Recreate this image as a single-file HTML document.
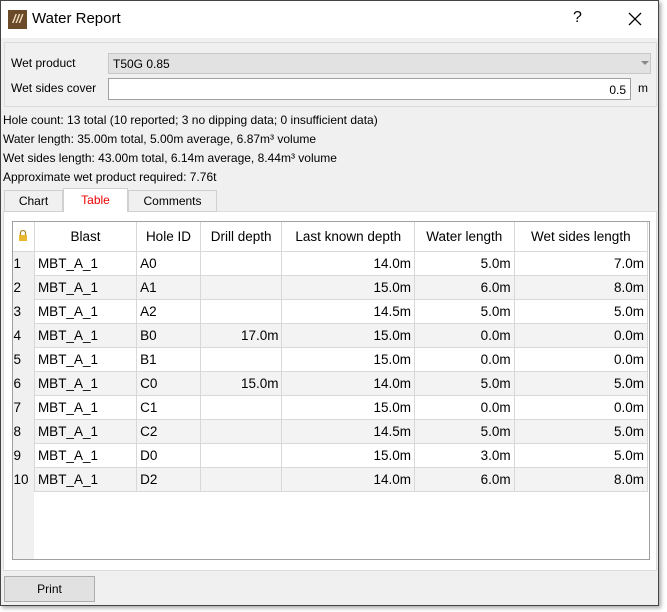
<!DOCTYPE html>
<html><head><style>
*{box-sizing:border-box;margin:0;padding:0}
body{width:667px;height:612px;background:#fff;font-family:"Liberation Sans",sans-serif;position:relative;overflow:hidden;color:#000}
.win{position:absolute;left:0;top:0;width:659px;height:606px;background:#f0f0f0;border:1px solid #444;box-shadow:2px 2px 4px rgba(0,0,0,.35)}
.title{position:absolute;left:0;top:0;width:657px;height:37px;background:#fff}
.abs{position:absolute;white-space:nowrap}
.info{font-size:12px;left:2px}
table{border-collapse:collapse;font-size:13.5px}
td,th{border:1px solid #d8d8d8;height:24px;padding:0 3px;font-weight:normal}
th{height:30px;background:#fff}
td.n{background:#f0f0f0;border:none;padding-left:1px}
td.r{text-align:right}
tr.alt td{background:#f3f3f3}
tr.alt td.n{background:#f0f0f0}
</style></head><body>
<div class="win">
<div class="title">
 <div class="abs" style="left:7px;top:9px;width:19px;height:19px;background:#6b4a2a;color:#f0e0c0;font-size:12px;font-weight:bold;font-style:italic;text-align:center;line-height:19px">///</div>
 <div class="abs" style="left:31px;top:9px;font-size:15px">Water Report</div>
 <div class="abs" style="left:572px;top:8px;font-size:16px">?</div>
 <svg class="abs" style="left:627px;top:11px" width="14" height="14"><path d="M1 1L13 13M13 1L1 13" stroke="#000" stroke-width="1.3"/></svg>
</div>
<div class="abs" style="left:3px;top:41px;width:653px;height:65px;border:1px solid #dcdcdc"></div>
<div class="abs" style="left:10px;top:55px;font-size:12px">Wet product</div>
<div class="abs" style="left:107px;top:52px;width:543px;height:21px;background:#e2e2e2;border:1px solid #c8c8c8;font-size:12px;padding:3px 4px">T50G 0.85</div>
<div class="abs" style="left:640px;top:60px;width:0;height:0;border-left:4px solid transparent;border-right:4px solid transparent;border-top:4px solid #888"></div>
<div class="abs" style="left:10px;top:80px;font-size:12px">Wet sides cover</div>
<div class="abs" style="left:107px;top:77px;width:523px;height:22px;background:#fff;border:1px solid #a0a0a0;font-size:12px;padding:4px 4px;text-align:right">0.5</div>
<div class="abs" style="left:637px;top:80px;font-size:12px">m</div>
<div class="abs info" style="top:112px">Hole count: 13 total (10 reported; 3 no dipping data; 0 insufficient data)</div>
<div class="abs info" style="top:131px">Water length: 35.00m total, 5.00m average, 6.87m³ volume</div>
<div class="abs info" style="top:150px">Wet sides length: 43.00m total, 6.14m average, 8.44m³ volume</div>
<div class="abs info" style="top:169px">Approximate wet product required: 7.76t</div>
<div class="abs" style="left:2px;top:210px;width:654px;height:360px;background:#fff;border:1px solid #dcdcdc"></div>
<div class="abs" style="left:3px;top:189px;width:59px;height:22px;border:1px solid #d0d0d0;background:#f0f0f0;font-size:12px;text-align:center;line-height:20px">Chart</div>
<div class="abs" style="left:62px;top:187px;width:65px;height:24px;border:1px solid #d0d0d0;border-bottom:none;background:#fff;font-size:12px;text-align:center;line-height:22px;color:#e00">Table</div>
<div class="abs" style="left:127px;top:189px;width:89px;height:22px;border:1px solid #d0d0d0;background:#f0f0f0;font-size:12px;text-align:center;line-height:20px">Comments</div>
<div class="abs" style="left:11px;top:220px;width:638px;height:339px;border:1px solid #a0a0a0;background:#fff;overflow:hidden">
<div class="abs" style="left:0;top:30px;width:21px;height:310px;background:#f0f0f0"></div>
<table class="abs" style="left:-1px;top:-1px">
<tr><th style="width:22px;border-right:1px solid #d8d8d8"><svg width="10" height="13"><path d="M2.5 6V4a2.5 2.5 0 0 1 5 0v2" fill="none" stroke="#b08a2a" stroke-width="1.3"/><rect x="1" y="6" width="8" height="6" fill="#e8b830"/></svg></th><th style="width:103px">Blast</th><th style="width:64px">Hole ID</th><th style="width:82px">Drill depth</th><th style="width:133px">Last known depth</th><th style="width:100px">Water length</th><th style="width:134px">Wet sides length</th></tr>
<tr><td class="n">1</td><td>MBT_A_1</td><td>A0</td><td></td><td class="r">14.0m</td><td class="r">5.0m</td><td class="r">7.0m</td></tr>
<tr class="alt"><td class="n">2</td><td>MBT_A_1</td><td>A1</td><td></td><td class="r">15.0m</td><td class="r">6.0m</td><td class="r">8.0m</td></tr>
<tr><td class="n">3</td><td>MBT_A_1</td><td>A2</td><td></td><td class="r">14.5m</td><td class="r">5.0m</td><td class="r">5.0m</td></tr>
<tr class="alt"><td class="n">4</td><td>MBT_A_1</td><td>B0</td><td class="r">17.0m</td><td class="r">15.0m</td><td class="r">0.0m</td><td class="r">0.0m</td></tr>
<tr><td class="n">5</td><td>MBT_A_1</td><td>B1</td><td></td><td class="r">15.0m</td><td class="r">0.0m</td><td class="r">0.0m</td></tr>
<tr class="alt"><td class="n">6</td><td>MBT_A_1</td><td>C0</td><td class="r">15.0m</td><td class="r">14.0m</td><td class="r">5.0m</td><td class="r">5.0m</td></tr>
<tr><td class="n">7</td><td>MBT_A_1</td><td>C1</td><td></td><td class="r">15.0m</td><td class="r">0.0m</td><td class="r">0.0m</td></tr>
<tr class="alt"><td class="n">8</td><td>MBT_A_1</td><td>C2</td><td></td><td class="r">14.5m</td><td class="r">5.0m</td><td class="r">5.0m</td></tr>
<tr><td class="n">9</td><td>MBT_A_1</td><td>D0</td><td></td><td class="r">15.0m</td><td class="r">3.0m</td><td class="r">5.0m</td></tr>
<tr class="alt"><td class="n">10</td><td>MBT_A_1</td><td>D2</td><td></td><td class="r">14.0m</td><td class="r">6.0m</td><td class="r">8.0m</td></tr>
</table>
</div>
<div class="abs" style="left:3px;top:575px;width:91px;height:26px;background:#e1e1e1;border:1px solid #adadad;font-size:12px;text-align:center;line-height:24px">Print</div>
</div>
</body></html>
